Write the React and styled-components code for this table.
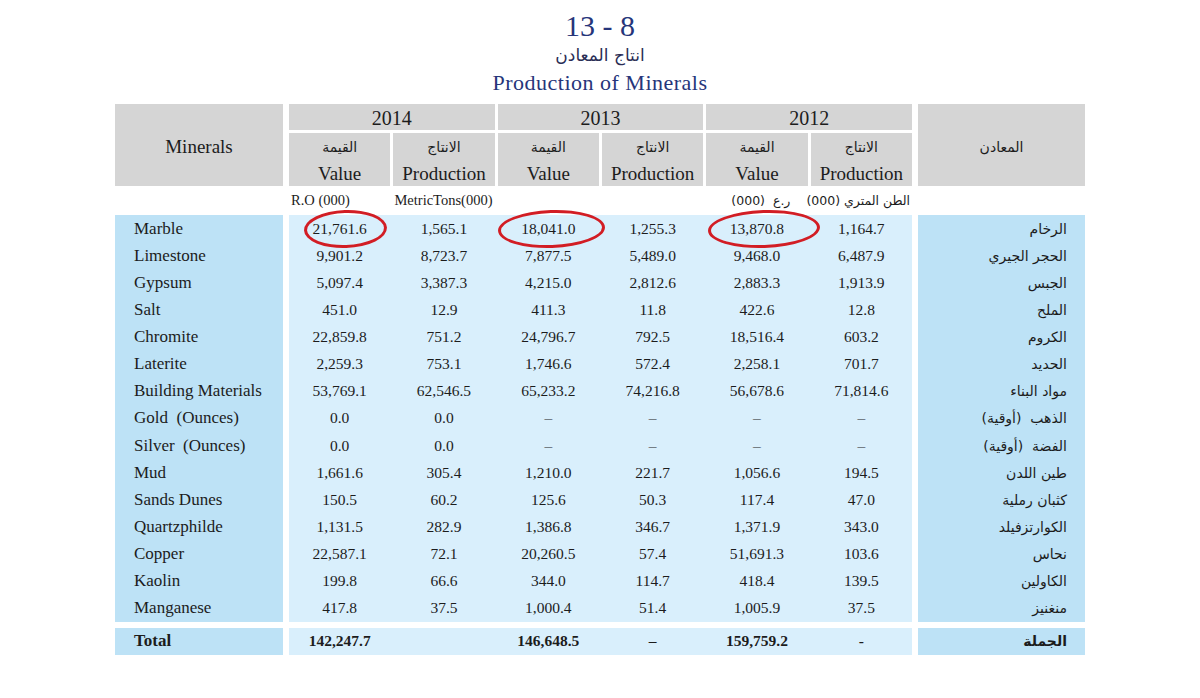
import React from "react";
import styled, { createGlobalStyle } from "styled-components";

const rows = [
  ["Marble", "الرخام", ["21,761.6", "1,565.1", "18,041.0", "1,255.3", "13,870.8", "1,164.7"]],
  ["Limestone", "الحجر الجيري", ["9,901.2", "8,723.7", "7,877.5", "5,489.0", "9,468.0", "6,487.9"]],
  ["Gypsum", "الجبس", ["5,097.4", "3,387.3", "4,215.0", "2,812.6", "2,883.3", "1,913.9"]],
  ["Salt", "الملح", ["451.0", "12.9", "411.3", "11.8", "422.6", "12.8"]],
  ["Chromite", "الكروم", ["22,859.8", "751.2", "24,796.7", "792.5", "18,516.4", "603.2"]],
  ["Laterite", "الحديد", ["2,259.3", "753.1", "1,746.6", "572.4", "2,258.1", "701.7"]],
  ["Building Materials", "مواد البناء", ["53,769.1", "62,546.5", "65,233.2", "74,216.8", "56,678.6", "71,814.6"]],
  ["Gold  (Ounces)", "الذهب  (أوقية)", ["0.0", "0.0", "–", "–", "–", "–"]],
  ["Silver  (Ounces)", "الفضة  (أوقية)", ["0.0", "0.0", "–", "–", "–", "–"]],
  ["Mud", "طين اللدن", ["1,661.6", "305.4", "1,210.0", "221.7", "1,056.6", "194.5"]],
  ["Sands Dunes", "كثبان رملية", ["150.5", "60.2", "125.6", "50.3", "117.4", "47.0"]],
  ["Quartzphilde", "الكوارتزفيلد", ["1,131.5", "282.9", "1,386.8", "346.7", "1,371.9", "343.0"]],
  ["Copper", "نحاس", ["22,587.1", "72.1", "20,260.5", "57.4", "51,691.3", "103.6"]],
  ["Kaolin", "الكاولين", ["199.8", "66.6", "344.0", "114.7", "418.4", "139.5"]],
  ["Manganese", "منغنيز", ["417.8", "37.5", "1,000.4", "51.4", "1,005.9", "37.5"]],
];

const totals = ["142,247.7", "", "146,648.5", "–", "159,759.2", "-"];

// red hand-drawn marks on the Marble row (column index -> ellipse box)
const marks = {
  0: { left: 15, width: 83 },
  2: { left: 0, width: 107 },
  4: { left: 2, width: 112 },
};

const years = ["2014", "2013", "2012"];

const ROW_H = "27.13px";

const GlobalStyle = createGlobalStyle`
  body {
    margin: 0;
    background: #ffffff;
    font-family: "Liberation Serif", "Times New Roman", serif;
    color: #1c1c1c;
  }
`;

const Page = styled.div`
  width: 1200px;
  height: 698px;
  padding-top: 11px;
  box-sizing: border-box;
`;

const TitleBlock = styled.div`
  display: flex;
  flex-direction: column;
  align-items: center;
  color: #26357a;
`;

const Number = styled.div`
  font-size: 30px;
  line-height: 30px;
`;

const ArabicTitle = styled.div`
  margin-top: 3px;
  font-family: "DejaVu Sans", sans-serif;
  font-size: 17px;
  line-height: 22px;
  color: #2a2d55;
  direction: rtl;
`;

const EnglishTitle = styled.div`
  margin-top: 4px;
  font-size: 22px;
  line-height: 26px;
  letter-spacing: 0.5px;
`;

const Table = styled.div`
  width: 970px;
  margin: 8px auto 0;
`;

const Section = styled.div`
  display: grid;
  grid-template-columns: 168px 1fr 167px;
  column-gap: 6px;
  margin-top: ${(p) => p.$gap || 0}px;
`;

const HeadCell = styled.div`
  background: #d5d5d5;
  display: flex;
  align-items: center;
  justify-content: center;
  font-size: 19px;
  padding-top: 4px;
`;

const ArabicHead = styled(HeadCell)`
  font-family: "DejaVu Sans", sans-serif;
  font-size: 14px;
  direction: rtl;
`;

const SixGrid = styled.div`
  display: grid;
  grid-template-columns: repeat(6, 1fr);
  column-gap: 3px;
  row-gap: ${(p) => p.$rowGap || 0}px;
  grid-auto-rows: ${(p) => p.$rowH || ROW_H};
  background: ${(p) => p.$bg || "transparent"};
`;

const YearCell = styled.div`
  grid-column: span 2;
  height: 26px;
  box-sizing: border-box;
  padding-top: 3px;
  background: #d5d5d5;
  display: flex;
  align-items: center;
  justify-content: center;
  font-size: 20px;
`;

const SubCell = styled.div`
  height: 53px;
  background: #d5d5d5;
  display: flex;
  flex-direction: column;
  align-items: center;
`;

const SubArabic = styled.div`
  font-family: "DejaVu Sans", sans-serif;
  font-size: 14px;
  line-height: 28px;
  direction: rtl;
`;

const SubEnglish = styled.div`
  font-size: 19px;
  line-height: 25px;
`;

const UnitRow = styled(SixGrid)`
  grid-auto-rows: 29px;
`;

const UnitCell = styled.div`
  display: flex;
  align-items: center;
  padding-left: 2px;
  font-size: 14.5px;
  white-space: pre;
`;

const ArabicUnit = styled.div`
  display: flex;
  align-items: center;
  direction: rtl;
  padding-right: ${(p) => p.$pad}px;
  font-family: "DejaVu Sans", sans-serif;
  font-size: 12.5px;
  white-space: pre;
`;

const NameCol = styled.div`
  background: #bde2f6;
  padding-left: 19px;
`;

const NameCell = styled.div`
  height: ${ROW_H};
  display: flex;
  align-items: center;
  font-size: 17px;
  font-weight: ${(p) => (p.$bold ? 700 : 400)};
  white-space: pre;
`;

const ArabicCol = styled.div`
  background: #bde2f6;
  padding-right: 18px;
`;

const ArabicCell = styled.div`
  height: ${ROW_H};
  display: flex;
  align-items: center;
  direction: rtl;
  font-family: "DejaVu Sans", sans-serif;
  font-size: 14px;
  font-weight: ${(p) => (p.$bold ? 700 : 400)};
  white-space: pre;
`;

const DataCell = styled.div`
  position: relative;
  display: flex;
  align-items: center;
  justify-content: center;
  font-size: 15.5px;
  font-weight: ${(p) => (p.$bold ? 700 : 400)};
`;

const Mark = styled.span`
  position: absolute;
  top: -5px;
  left: ${(p) => p.$left}px;
  width: ${(p) => p.$width}px;
  height: 38px;
  box-sizing: border-box;
  border: 3px solid #d21d24;
  border-radius: 50%;
  transform: rotate(-2deg);
  pointer-events: none;
`;

const App = () => {
  return (
    <Page>
      <GlobalStyle />
      <TitleBlock>
        <Number>13 - 8</Number>
        <ArabicTitle>انتاج المعادن</ArabicTitle>
        <EnglishTitle>Production of Minerals</EnglishTitle>
      </TitleBlock>

      <Table>
        <Section>
          <HeadCell>Minerals</HeadCell>
          <SixGrid $rowGap={3} $rowH="auto">
            {years.map((y) => (
              <YearCell key={y}>{y}</YearCell>
            ))}
            {years.map((y) => (
              <React.Fragment key={y}>
                <SubCell>
                  <SubArabic>القيمة</SubArabic>
                  <SubEnglish>Value</SubEnglish>
                </SubCell>
                <SubCell>
                  <SubArabic>الانتاج</SubArabic>
                  <SubEnglish>Production</SubEnglish>
                </SubCell>
              </React.Fragment>
            ))}
          </SixGrid>
          <ArabicHead>المعادن</ArabicHead>
        </Section>

        <Section>
          <div />
          <UnitRow>
            <UnitCell>R.O (000)</UnitCell>
            <UnitCell>MetricTons(000)</UnitCell>
            <UnitCell />
            <UnitCell />
            <ArabicUnit $pad={13}>ر.ع  (000)</ArabicUnit>
            <ArabicUnit $pad={2}>الطن المتري (000)</ArabicUnit>
          </UnitRow>
          <div />
        </Section>

        <Section>
          <NameCol>
            {rows.map(([name]) => (
              <NameCell key={name}>{name}</NameCell>
            ))}
          </NameCol>
          <SixGrid $bg="#d9effc">
            {rows.map(([name, , values], r) =>
              values.map((v, c) => (
                <DataCell key={name + c}>
                  {v}
                  {r === 0 && marks[c] && <Mark $left={marks[c].left} $width={marks[c].width} />}
                </DataCell>
              ))
            )}
          </SixGrid>
          <ArabicCol>
            {rows.map(([name, ar]) => (
              <ArabicCell key={name}>{ar}</ArabicCell>
            ))}
          </ArabicCol>
        </Section>

        <Section $gap={6}>
          <NameCol>
            <NameCell $bold>Total</NameCell>
          </NameCol>
          <SixGrid $bg="#d9effc">
            {totals.map((v, c) => (
              <DataCell key={c} $bold>
                {v}
              </DataCell>
            ))}
          </SixGrid>
          <ArabicCol>
            <ArabicCell $bold>الجملة</ArabicCell>
          </ArabicCol>
        </Section>
      </Table>
    </Page>
  );
};

export default App;
